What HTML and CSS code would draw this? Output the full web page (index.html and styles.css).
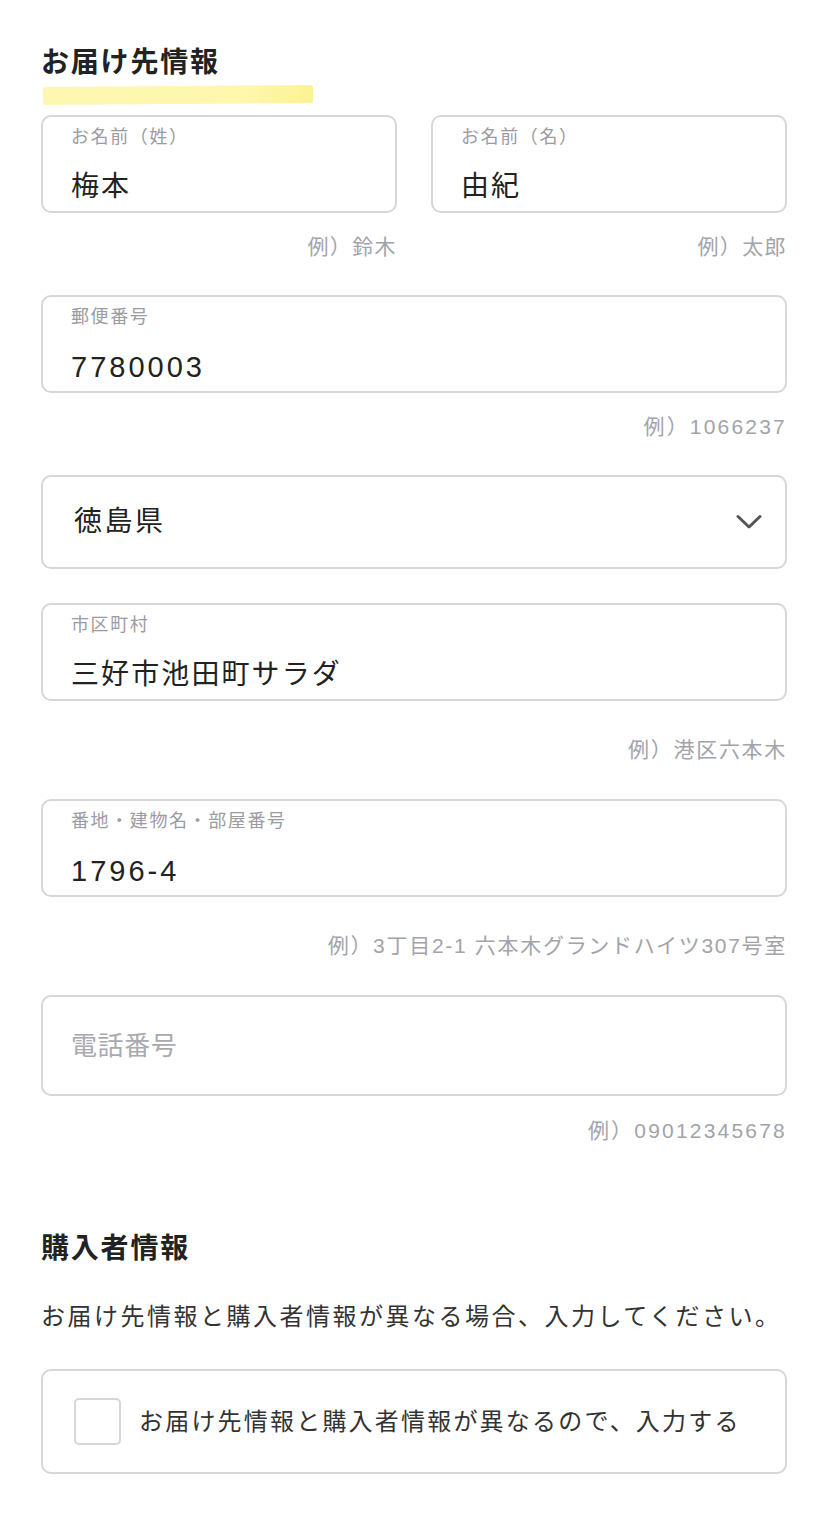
FILE: index.html
```html
<!DOCTYPE html>
<html lang="ja">
<head>
    <meta charset="UTF-8">
    <meta name="viewport" content="width=device-width, initial-scale=1.0">
    <title>お届け先情報</title>
    <link rel="stylesheet" href="styles.css">
</head>
<body>
    <main id="page">
        <section class="form-section">
            <h2 class="section-title">お届け先情報</h2>
            <div class="title-mark"></div>

            <div class="name-row">
                <div class="field">
                    <div class="box">
                        <span class="label">お名前（姓）</span>
                        <span class="value">梅本</span>
                    </div>
                    <p class="hint">例）鈴木</p>
                </div>
                <div class="field">
                    <div class="box">
                        <span class="label">お名前（名）</span>
                        <span class="value">由紀</span>
                    </div>
                    <p class="hint">例）太郎</p>
                </div>
            </div>

            <div class="field">
                <div class="box">
                    <span class="label">郵便番号</span>
                    <span class="value num">7780003</span>
                </div>
                <p class="hint num">例）1066237</p>
            </div>

            <div class="field">
                <div class="select-box">
                    <span class="select-value">徳島県</span>
                    <svg class="chevron" width="26" height="16" viewBox="0 0 26 16">
                        <polyline points="2,2.5 13,13 24,2.5" fill="none" stroke="#555" stroke-width="3" stroke-linecap="round" stroke-linejoin="round"/>
                    </svg>
                </div>
            </div>

            <div class="field field-far">
                <div class="box">
                    <span class="label">市区町村</span>
                    <span class="value">三好市池田町サラダ</span>
                </div>
                <p class="hint hint-far">例）港区六本木</p>
            </div>

            <div class="field field-far">
                <div class="box">
                    <span class="label">番地・建物名・部屋番号</span>
                    <span class="value num">1796-4</span>
                </div>
                <p class="hint hint-far">例）3丁目2-1 六本木グランドハイツ307号室</p>
            </div>

            <div class="field">
                <div class="box box-empty">
                    <span class="placeholder">電話番号</span>
                </div>
                <p class="hint hint-phone num">例）09012345678</p>
            </div>
        </section>

        <section class="form-section buyer">
            <h2 class="section-title">購入者情報</h2>
            <p class="note">お届け先情報と購入者情報が異なる場合、入力してください。</p>
            <label class="check-card">
                <span class="check"></span>
                <span class="check-text">お届け先情報と購入者情報が異なるので、入力する</span>
            </label>
        </section>
    </main>
</body>
</html>
```

FILE: styles.css
```css
body {
    margin: 0;
    padding: 0;
    background: #fff;
    color: #222;
    font-family: "Liberation Sans", "Noto Sans CJK JP", sans-serif;
}
#page {
    padding: 43px 39px 40px 41px;
}
.section-title {
    margin: 0;
    font-size: 28px;
    line-height: 40px;
    font-weight: bold;
    letter-spacing: 1.8px;
    color: #222;
}
.title-mark {
    width: 270px;
    height: 18px;
    margin: 3px 0 11px 2px;
    background: linear-gradient(90deg, #fdf7b2, #fef7ac 75%, #fcf295);
    border-radius: 2px;
    transform: rotate(-0.4deg);
    filter: blur(0.6px);
}
.name-row {
    display: grid;
    grid-template-columns: 1fr 1fr;
    gap: 34px;
}
.field {
    margin-bottom: 34px;
}
.field-far {
    margin-bottom: 35px;
}
.box {
    box-sizing: border-box;
    height: 98px;
    border: 2px solid #d6d6db;
    border-radius: 10px;
    padding: 8px 28px 0;
    display: flex;
    flex-direction: column;
}
.label {
    font-size: 18px;
    line-height: 24px;
    color: #9b9ba1;
    letter-spacing: 1.6px;
}
.value {
    margin-top: 18px;
    font-size: 28px;
    line-height: 40px;
    letter-spacing: 2.1px;
    color: #222;
}
.value.num {
    font-size: 29px;
    letter-spacing: 3px;
}
.box-empty {
    height: 101px;
    padding-top: 0;
    justify-content: center;
}
.placeholder {
    font-size: 26px;
    line-height: 40px;
    letter-spacing: 0.6px;
    color: #a9a9b0;
}
.hint {
    margin: 20px 0 0;
    text-align: right;
    font-size: 21px;
    line-height: 28px;
    letter-spacing: 1.4px;
    color: #a3a3aa;
}
.hint.num {
    letter-spacing: 2.2px;
}
.hint-far {
    margin-top: 35px;
    letter-spacing: 1.7px;
}
.hint-phone {
    margin-top: 21px;
    letter-spacing: 2.6px;
}
.select-box {
    box-sizing: border-box;
    height: 94px;
    border: 2px solid #d6d6db;
    border-radius: 10px;
    padding: 0 23px 0 31px;
    display: flex;
    align-items: center;
    justify-content: space-between;
}
.select-value {
    font-size: 28px;
    line-height: 40px;
    letter-spacing: 2.5px;
    color: #222;
}
.buyer {
    margin-top: 84px;
}
.note {
    margin: 30px 0 34px;
    font-size: 24px;
    line-height: 36px;
    letter-spacing: 2.5px;
    color: #333;
}
.check-card {
    box-sizing: border-box;
    height: 105px;
    border: 2px solid #d6d6db;
    border-radius: 10px;
    padding: 0 31px;
    display: flex;
    align-items: center;
    gap: 18px;
}
.check {
    box-sizing: border-box;
    width: 47px;
    height: 47px;
    flex: none;
    border: 2px solid #d6d6db;
    border-radius: 5px;
}
.check-text {
    font-size: 24px;
    line-height: 36px;
    letter-spacing: 2.2px;
    color: #333;
}
```
